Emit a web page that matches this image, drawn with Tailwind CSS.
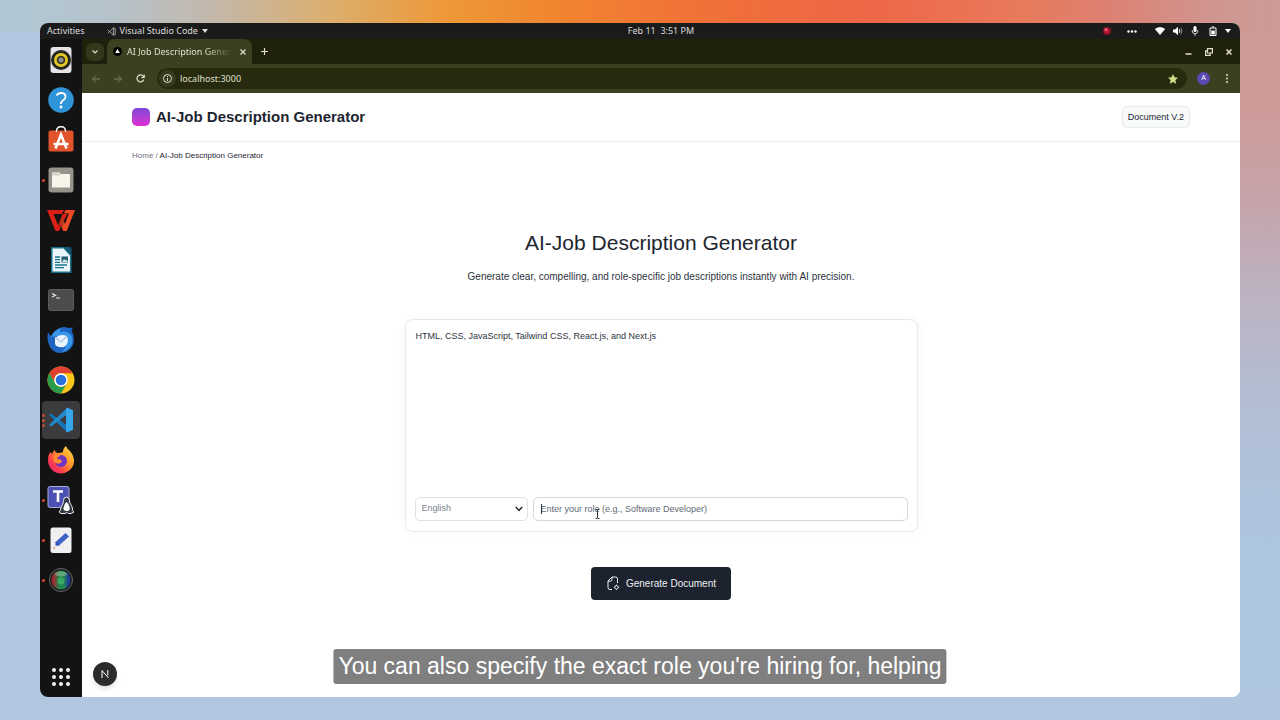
<!DOCTYPE html>
<html lang="en">
<head>
<meta charset="utf-8">
<meta name="viewport" content="width=device-width, initial-scale=1">
<title>AI Job Description Generator</title>
<script src="https://cdn.jsdelivr.net/npm/@tailwindcss/browser@4"></script>
</head>
<body class="relative flex min-h-screen flex-col bg-[#b1c6df] bg-[linear-gradient(to_right,#b0c9d6_0%,#b6c2ca_9%,#c4b7a9_17%,#dcae6c_26%,#ee9838_35%,#f18430_44%,#f17038_55%,#ee6747_68%,#e87a5c_80%,#dd8070_86%,#d09691_95%,#cc9c96_100%),linear-gradient(to_bottom,#cc9c96_0%,#cf9b97_14%,#c6a3a8_27%,#bdb1c0_40%,#b3bdd2_54%,#aec4de_72%,#adc8e1_84%,#b1c6df_100%)] [background-size:100%_32px,80px_100%] [background-position:top,right] bg-no-repeat px-10 py-[23px] font-['Liberation_Sans',Arial,sans-serif] text-[#1e2530]">

<div class="flex flex-1 flex-col overflow-hidden rounded-lg bg-white">
  <!-- System top bar -->
  <header class="grid h-4 grid-cols-[1fr_auto_1fr] items-center bg-[#1b1b1b] pr-[7px] pl-[49px] font-['Noto_Sans',sans-serif] text-[9px] leading-4 text-[#dcdcdc]">
    <div class="-ml-[42px] flex items-center gap-[22px]">
      <button>Activities</button>
      <button class="flex items-center gap-1">
        <svg class="size-[9px]" viewBox="0 0 24 24" fill="none" stroke="#a8a8a8" stroke-width="2.500"><path d="M17 2v20M17 2l5 2v16l-5 2M17 3 2 16M17 21 2 8"/></svg>
        Visual Studio Code
        <svg class="w-[6px]" viewBox="0 0 6 4" fill="currentColor"><path d="M0 0h6L3 4z"/></svg>
      </button>
    </div>
    <time class="whitespace-pre">Feb 11  3:51 PM</time>
    <div class="flex items-center justify-end text-white">
      <svg class="mr-4 size-2" viewBox="0 0 8 8"><circle cx="4" cy="4" r="4" fill="#8e1027"/><circle cx="3.500" cy="3.500" r="2.400" fill="#c92543"/><circle cx="2.700" cy="2.500" r="1" fill="#ee8d9a"/></svg>
      <svg class="mr-[18px] h-[3px] w-[10px]" viewBox="0 0 10 3" fill="currentColor"><circle cx="1.500" cy="1.500" r="1.200"/><circle cx="5" cy="1.500" r="1.200"/><circle cx="8.500" cy="1.500" r="1.200"/></svg>
      <svg class="mr-2 h-[8px] w-[10px]" viewBox="0 0 10 8" fill="currentColor"><path d="M0 2.300C2.500-.3 7.500-.3 10 2.300L5 8z"/></svg>
      <svg class="mr-2 size-[10px]" viewBox="0 0 10 10"><path d="M0 3.500h2L5 .8v8.400L2 6.500H0z" fill="currentColor"/><path d="M6.300 3.200q1.200 1.800 0 3.600" fill="none" stroke="currentColor"/><path d="M7.800 1.700q2.300 3.300 0 6.600" fill="none" stroke="#888"/></svg>
      <svg class="mr-[10px] h-[10px] w-[8px]" viewBox="0 0 8 10"><rect x="2.500" width="3" height="6" rx="1.500" fill="currentColor"/><path d="M1.200 4v1a2.800 2.800 0 0 0 5.600 0V4M4 8v2" fill="none" stroke="#ccc"/></svg>
      <svg class="mr-2 h-[10px] w-[8px]" viewBox="0 0 8 10"><path d="M1 2h6v7.500H1zM3 .8h2" fill="none" stroke="currentColor"/><path d="M2.200 4.500h3.600v4H2.200z" fill="currentColor"/></svg>
      <svg class="mr-[2px] w-[6px]" viewBox="0 0 6 4" fill="currentColor"><path d="M0 0h6L3 4z"/></svg>
    </div>
  </header>

  <div class="flex flex-1">
    <!-- Dock -->
    <nav aria-label="Dock" class="flex w-[42px] flex-col bg-[#131313] pt-px">
      <button aria-label="Rhythmbox" class="flex h-10 items-center justify-center">
        <svg class="size-7" viewBox="0 0 28 28"><rect x="3.500" y="1" width="21" height="26" rx="3" fill="#e6e3e6"/><circle cx="14" cy="14" r="10" fill="#272722"/><circle cx="14" cy="14" r="7" fill="#e6cb28"/><circle cx="14" cy="14" r="4.300" fill="#3a3820"/><circle cx="14" cy="14" r="2.500" fill="#8d8f93"/></svg>
      </button>
      <button aria-label="Help" class="flex h-10 items-center justify-center">
        <svg class="size-7" viewBox="0 0 28 28"><circle cx="14" cy="14" r="12.800" fill="#2f94d8"/><path d="M9.500 9.500Q11 7 14.200 7q4.300 0 4.300 3.700 0 2-2.300 3.500-2.200 1.500-2.200 3.800" fill="none" stroke="#fff" stroke-width="1.800"/><circle cx="14" cy="21" r="1.400" fill="#fff"/></svg>
      </button>
      <button aria-label="Software" class="flex h-10 items-center justify-center">
        <svg class="size-7" viewBox="0 0 28 28"><path d="M9.500 6V5a4.500 4.500 0 0 1 9 0v1" fill="none" stroke="#d7d0cc" stroke-width="1.300"/><rect x="1.500" y="4.500" width="25" height="21" rx="2" fill="#e2552c"/><path d="M9.500 6V5a4.500 4.500 0 0 1 9 0v1" fill="none" stroke="#eee" stroke-width="1.300"/><path d="m8.500 22.500 5.500-14 5.500 14M6.500 18h15" fill="none" stroke="#fff" stroke-width="2.600"/></svg>
      </button>
      <button aria-label="Files" class="relative flex h-10 items-center justify-center">
        <span class="absolute left-[2px] size-[3px] rounded-full bg-[#d6492e]"></span>
        <svg class="size-7" viewBox="0 0 28 28"><rect x="1.500" y="1.500" width="25" height="25" rx="3" fill="#96938a"/><path d="M5 8V6.500h7.500L14 8h9v13.500H5z" fill="#f7f3e9"/><path d="M5 6.500h7.500L14 8l-1.500 1.500H5z" fill="#dcd6c9"/></svg>
      </button>
      <button aria-label="WPS Office" class="flex h-10 items-center justify-center">
        <svg class="size-7" viewBox="0 0 28 28"><path d="M0 4h17l-2 4H6.500l4.500 11 4.500-11h4.700L12 25H8.500z" fill="#dc2018"/><path d="M18.500 4H28l-8.300 21h-3.600L13 17l2.500-6 2.400 7 4-10.500h-5z" fill="#ef4a24"/><path d="m15 10.500-3.500 8.500 2.300 6 4-10z" fill="#131313" opacity=".25"/></svg>
      </button>
      <button aria-label="LibreOffice Writer" class="flex h-10 items-center justify-center">
        <svg class="size-7" viewBox="0 0 28 28"><path d="M4 1h14l6.500 7v19H4z" fill="#176f8d"/><path d="M5.500 2.500h11L23 9.500v16H5.500z" fill="#e9f5f8"/><path d="M16.500 1h6a2 2 0 0 1 2 2v6.500z" fill="#125772"/><path d="M8 11h5M8 13.700h5M8 16.400h5M8 19h12M8 21.700h9" stroke="#19718f" stroke-width="1.300"/><path d="M14.500 10.500h6.500v6h-6.500z" fill="#255b6e"/><path d="m15 16 2-3 1.500 1.500 1-1L21 16z" fill="#cce8ed"/></svg>
      </button>
      <button aria-label="Terminal" class="flex h-10 items-center justify-center">
        <svg class="size-7" viewBox="0 0 28 28"><rect x="1.500" y="3.500" width="25" height="21" rx="2" fill="#4d4b4c" stroke="#5d5b5c"/><path d="m5 7.500 3.500 1.700L5 11M9 12h4" fill="none" stroke="#e5e5e5" stroke-width="1.200"/></svg>
      </button>
      <button aria-label="Thunderbird" class="flex h-10 items-center justify-center">
        <svg class="size-7" viewBox="0 0 28 28"><path d="M1 6q1 3 4 4 2-6 9-8.500 4-1 7 .5l5-.5-1.500 3q2.500 4 2.300 9.500A13 13 0 0 1 14 27C3 27-1 16 1 6z" fill="#1d65c0"/><path d="M4 11q2-7 11-9-3 2-2 4 7-2 11 3 3 5 0 11-4 5-9 6 7-7 3-13-5-5-14-2z" fill="#3796e9"/><path d="M8 12q5-5 12-2 3 7-3 11-7 1-9-3z" fill="#e9f3fd"/><path d="m8 11 6 5 6-6" fill="none" stroke="#a7c7e7" stroke-width="1.200"/></svg>
      </button>
      <button aria-label="Chrome" class="flex h-10 items-center justify-center">
        <svg class="size-7" viewBox="0 0 28 28"><circle cx="14" cy="14" r="13.500" fill="#f8c518"/><path d="M2.300 7.300A13.500 13.500 0 0 1 25.700 7.300H14A6.700 6.700 0 0 0 8.200 17.400z" fill="#df4032"/><path d="M2.300 7.300 8.200 17.400A6.700 6.700 0 0 0 19.800 17.400L14 27.500A13.500 13.500 0 0 1 2.300 7.300z" fill="#299b4d"/><circle cx="14" cy="14" r="6.700" fill="#fff"/><circle cx="14" cy="14" r="5.300" fill="#286fdc"/></svg>
      </button>
      <button aria-label="Visual Studio Code" class="relative flex h-10 items-center justify-center">
        <span class="absolute inset-x-[2px] inset-y-px rounded-sm bg-[#3b3b3d]"></span>
        <span class="absolute left-[2px] flex flex-col gap-[2px]"><i class="size-[3px] rounded-full bg-[#c44a30]"></i><i class="size-[3px] rounded-full bg-[#c44a30]"></i><i class="size-[3px] rounded-full bg-[#c44a30]"></i></span>
        <svg class="relative size-7" viewBox="0 0 28 28"><path d="m2 9 2-1.500L20.500 20v6.500z" fill="#1476b8"/><path d="m2 19 2 1.500L20.500 8V1.500z" fill="#2489ca"/><path d="m20 1.500 6 2.800v19.400l-6 2.800-1-1V3z" fill="#35a7ec"/></svg>
      </button>
      <button aria-label="Firefox" class="flex h-10 items-center justify-center">
        <svg class="size-7" viewBox="0 0 28 28"><defs><linearGradient id="fx" x1="1" y1="0" x2="0" y2="1"><stop offset="0" stop-color="#ffe14a"/><stop offset=".4" stop-color="#ff9a2c"/><stop offset=".7" stop-color="#fb3d4c"/><stop offset="1" stop-color="#df1e7e"/></linearGradient></defs><path d="M3 6q1 1 2 2 1-3 3-4 0 3 3 3 3 0 5-1 0-4 3-6 1 3 4 5 4 5 4 10A13 13 0 0 1 14 27.500 13 13 0 0 1 1 14.500Q1 9 3 6z" fill="url(#fx)"/><circle cx="14" cy="15" r="6" fill="#6c35c5"/><path d="M6 10q4-3 8 0-3 0-4 3 4 0 5 2-2 5-8 1z" fill="#ff8a2b"/></svg>
      </button>
      <button aria-label="Teams for Linux" class="relative flex h-10 items-center justify-center">
        <span class="absolute left-[2px] size-[3px] rounded-full bg-[#d6492e]"></span>
        <svg class="size-7" viewBox="0 0 28 28"><rect x="1" y=".5" width="21" height="21" rx="2" fill="#4b50b5" stroke="#a9abd9"/><path d="M6 5.500h10M11 5.500V16" stroke="#fff" stroke-width="2.600"/><path d="M19.500 11q3 0 3 4 0 2 2 4.500 1.500 3 1 5l1.500 1.500-3 1.500h-3l-1-1-2 1h-4l-2-1.500 1.500-2q0-3 2-5.500 1-2 1-4 0-3.500 3-3.500z" fill="#333a46" stroke="#e8eaf0"/><path d="M19.500 16q2 1 3 5t-3 4q-3.500 0-3-3.500.5-3.500 3-5.500z" fill="#fff"/></svg>
      </button>
      <button aria-label="Text Editor" class="relative flex h-10 items-center justify-center">
        <span class="absolute left-[2px] size-[3px] rounded-full bg-[#d6492e]"></span>
        <svg class="size-7" viewBox="0 0 28 28"><rect x="3.500" y="1.500" width="21" height="25.500" rx="2.500" fill="#f0f0f2"/><path d="m8.500 16 10-9 3.500 3.500-10 9-3.500.5z" fill="#3f62c6"/><path d="m8.500 16 3.500 3.500" stroke="#2a459c"/><circle cx="7" cy="22" r="1" fill="#d79d7d"/></svg>
      </button>
      <button aria-label="Kazam" class="relative flex h-10 items-center justify-center">
        <span class="absolute left-[2px] size-[3px] rounded-full bg-[#d6492e]"></span>
        <svg class="size-7" viewBox="0 0 28 28"><defs><linearGradient id="lens"><stop offset=".1" stop-color="#a3272d"/><stop offset=".4" stop-color="#23854e"/><stop offset=".65" stop-color="#23854e"/><stop offset=".9" stop-color="#1c3d9c"/></linearGradient></defs><circle cx="14" cy="14" r="11.500" fill="#1c1c1c" stroke="#68696b"/><circle cx="14" cy="14" r="9.500" fill="url(#lens)"/><ellipse cx="14" cy="8" rx="6" ry="2.500" fill="#b9d9c8" opacity=".4"/><circle cx="14" cy="15" r="3.500" fill="#38ac67"/></svg>
      </button>
      <button aria-label="Show applications" class="mt-auto flex h-10 items-center justify-center">
        <svg class="size-5" viewBox="0 0 20 20" fill="#f4f4f4"><circle cx="3" cy="3" r="2"/><circle cx="10" cy="3" r="2"/><circle cx="17" cy="3" r="2"/><circle cx="3" cy="10" r="2"/><circle cx="10" cy="10" r="2"/><circle cx="17" cy="10" r="2"/><circle cx="3" cy="17" r="2"/><circle cx="10" cy="17" r="2"/><circle cx="17" cy="17" r="2"/></svg>
      </button>
    </nav>

    <div class="flex min-w-0 flex-1 flex-col">
      <!-- Browser tabs -->
      <div class="flex h-[25px] items-center bg-[#20210c] pr-2 pl-1 font-['Noto_Sans',sans-serif] text-[9px] text-[#dfe0cd]">
        <button aria-label="Search tabs" class="flex size-[18px] items-center justify-center rounded-md bg-[#35381c]"><svg class="w-[6px]" viewBox="0 0 6 4" fill="none" stroke="currentColor" stroke-width="1.200"><path d="m.5.500 2.500 2.500L5.500.500"/></svg></button>
        <div class="ml-[3px] flex h-[25px] w-[145px] items-center rounded-t-lg bg-[#3c4020] px-[6px]">
          <svg class="size-[9px]" viewBox="0 0 10 10"><circle cx="5" cy="5" r="5" fill="#000"/><path d="m5 2.300 2.600 4.500H2.400z" fill="#fff"/></svg>
          <span class="ml-[5px] flex-1 overflow-hidden whitespace-nowrap [mask-image:linear-gradient(to_right,black_75%,transparent)]">AI Job Description Generator</span>
          <button aria-label="Close tab" class="ml-2"><svg class="size-[6px]" viewBox="0 0 6 6" stroke="currentColor" stroke-width="1.200"><path d="m.5.500 5 5m0-5-5 5"/></svg></button>
        </div>
        <button aria-label="New tab" class="ml-[9px]"><svg class="size-[7px]" viewBox="0 0 7 7" stroke="currentColor" stroke-width="1.200"><path d="M0 3.500h7M3.500 0v7"/></svg></button>
        <div class="ml-auto flex items-center gap-[13px]">
          <button aria-label="Minimize"><svg class="size-[7px]" viewBox="0 0 7 7" stroke="currentColor" stroke-width="1.500"><path d="M.5 6h6"/></svg></button>
          <button aria-label="Restore"><svg class="size-[8px]" viewBox="0 0 8 8" fill="none" stroke="currentColor" stroke-width="1.200"><path d="M2.500.600h4.900v4.400H2.500zM2.500 2.800H.6v4.600h4.600V5"/></svg></button>
          <button aria-label="Close"><svg class="size-[6px]" viewBox="0 0 6 6" stroke="currentColor" stroke-width="1.500"><path d="m.5.500 5 5m0-5-5 5"/></svg></button>
        </div>
      </div>
      <!-- Address bar -->
      <div class="flex h-[29px] items-center bg-[#3c4020] pr-3 pl-[10px] text-[#dfe0cd]">
        <button aria-label="Back" class="text-[#7f8266]"><svg class="size-2" viewBox="0 0 8 8" fill="none" stroke="currentColor"><path d="M8 4H.7M4 .5.600 4 4 7.500"/></svg></button>
        <button aria-label="Forward" class="ml-[14px] text-[#7f8266]"><svg class="size-2" viewBox="0 0 8 8" fill="none" stroke="currentColor"><path d="M0 4h7.300M4 .5 7.400 4 4 7.500"/></svg></button>
        <button aria-label="Reload" class="ml-[14px]"><svg class="size-[9px]" viewBox="0 0 9 9" fill="none" stroke="currentColor" stroke-width="1.200"><path d="M7.800 5.500A3.500 3.500 0 1 1 7.300 2.300L8 3.200M8.200.500v3H5.400"/></svg></button>
        <div class="ml-3 flex h-[21px] flex-1 items-center rounded-full bg-[#272a0f] pr-[9px] pl-[2px]">
          <span class="flex size-[17px] items-center justify-center rounded-full bg-[#383b20]"><svg class="size-[9px]" viewBox="0 0 9 9" fill="none" stroke="currentColor"><circle cx="4.500" cy="4.500" r="4"/><path d="M4.500 4v3M4.500 2v1"/></svg></span>
          <input aria-label="Address" value="localhost:3000" class="ml-1 min-w-0 flex-1 bg-transparent font-['Noto_Sans',sans-serif] text-[9px] leading-4 outline-none">
          <button aria-label="Bookmark"><svg class="size-[10px]" viewBox="0 0 10 10" fill="#d0dd86"><path d="m5 0 1.500 3.300 3.500.4-2.600 2.400.7 3.600L5 7.900 1.900 9.700l.7-3.600L0 3.700l3.500-.4z"/></svg></button>
        </div>
        <button aria-label="Profile" class="ml-[10px] flex size-[13px] items-center justify-center rounded-full bg-[#5b48b0] text-[7px] text-white">A</button>
        <button aria-label="Menu" class="ml-4"><svg class="h-[9px] w-[2px]" viewBox="0 0 2 9" fill="currentColor"><circle cx="1" cy="1" r="1"/><circle cx="1" cy="4.500" r="1"/><circle cx="1" cy="8" r="1"/></svg></button>
      </div>

      <!-- Page -->
      <div class="flex flex-1 flex-col bg-white">
        <div class="flex h-[49px] items-center justify-between border-b border-[#ebecee] px-[50px]">
          <div class="flex items-center gap-[6px]">
            <span class="size-[18px] rounded-[5px] bg-linear-to-b from-[#7b45d8] to-[#e028d2]"></span>
            <span class="text-[15px] leading-5 font-bold">AI-Job Description Generator</span>
          </div>
          <button class="h-[22px] rounded-[5px] border border-[#e8ebee] bg-[#f8fafa] px-[5px] text-[9px] leading-5">Document V.2</button>
        </div>
        <nav aria-label="Breadcrumb" class="px-[50px] pt-2 text-[8px] leading-3"><a href="#" class="text-[#6b7280]">Home</a> <span class="text-[#6b7280]">/</span> AI-Job Description Generator</nav>

        <main class="flex flex-1 flex-col items-center px-4 pt-[65px]">
          <h1 class="text-[21px] leading-8">AI-Job Description Generator</h1>
          <p class="mt-[10px] text-[10px] leading-4 text-[#2c333d]">Generate clear, compelling, and role-specific job descriptions instantly with AI precision.</p>
          <form class="mt-[34px] flex w-full max-w-[513px] flex-col items-center">
            <div class="flex w-full flex-col rounded-lg border border-[#e9eaec] bg-white px-[9px] pt-2 pb-[10px] shadow-[0_0_8px_rgba(0,0,0,0.04)]">
              <textarea aria-label="Skills" class="h-[169px] resize-none px-px text-[9px] leading-4 text-[#2c333d] outline-none">HTML, CSS, JavaScript, Tailwind CSS, React.js, and Next.js</textarea>
              <div class="flex gap-[5px]">
                <div class="relative flex w-[113px]">
                  <select aria-label="Language" class="h-6 w-full appearance-none rounded-[5px] border border-[#dfe1e5] px-[6px] text-[9px] text-[#7b818c] outline-none"><option>English</option></select>
                  <svg class="pointer-events-none absolute top-[9px] right-[5px] w-2" viewBox="0 0 8 6" fill="none" stroke="#24262b" stroke-width="1.500"><path d="m.8 1 3.200 3.400L7.200 1"/></svg>
                </div>
                <div class="relative flex flex-1">
                  <input aria-label="Role" placeholder="Enter your role (e.g., Software Developer)" class="h-6 w-full rounded-[5px] border border-[#d3d6db] px-[7px] text-[9px] outline-none placeholder:text-[#626a77]">
                  <span class="absolute top-[7px] left-2 h-[10px] w-px bg-[#333]"></span>
                  <svg class="pointer-events-none absolute top-3 left-[62px] h-[10px] w-[5px]" viewBox="0 0 5 10" fill="none" stroke="#333"><path d="M.5.500h1.500l.5.500.5-.500h1.500M2.500 1v8M.5 9.500h1.500l.5-.500.5.500h1.500"/></svg>
                </div>
              </div>
            </div>
            <button type="button" class="mt-[35px] flex h-[33px] items-center gap-[6px] rounded-[4px] bg-[#1c222e] px-[15px] text-[10px] text-[#eef0f3]">
              <svg class="h-[15px] w-[14px]" viewBox="0 0 14 15" fill="none" stroke="currentColor" stroke-linejoin="round"><path d="M6 13.500H4a2 2 0 0 1-2-2V5l4-4h3.500a2 2 0 0 1 2 2v4M2 5.200h2.500A1.500 1.500 0 0 0 6 3.700V1"/><path d="m10.500 8.800.8 1.500 1.700 1-1.700 1-.8 1.500-.8-1.500-1.700-1 1.700-1z"/></svg>
              Generate Document
            </button>
          </form>
        </main>
        <div class="p-[11px]">
          <button aria-label="Next.js dev tools" class="flex size-6 items-center justify-center rounded-full bg-[#2b2b2b] text-white shadow-md"><svg class="size-2" viewBox="0 0 8 8" fill="none" stroke="currentColor"><path d="M1 8V.5L7.500 8M6.800 0v5.500"/></svg></button>
        </div>
      </div>
    </div>
  </div>
</div>

<!-- Subtitle overlay -->
<p class="absolute bottom-9 left-1/2 -translate-x-1/2 rounded-[3px] bg-[#7f7f7f] px-[5px] text-[23px] leading-[35px] whitespace-nowrap text-white">You can also specify the exact role you're hiring for, helping</p>
</body>
</html>
